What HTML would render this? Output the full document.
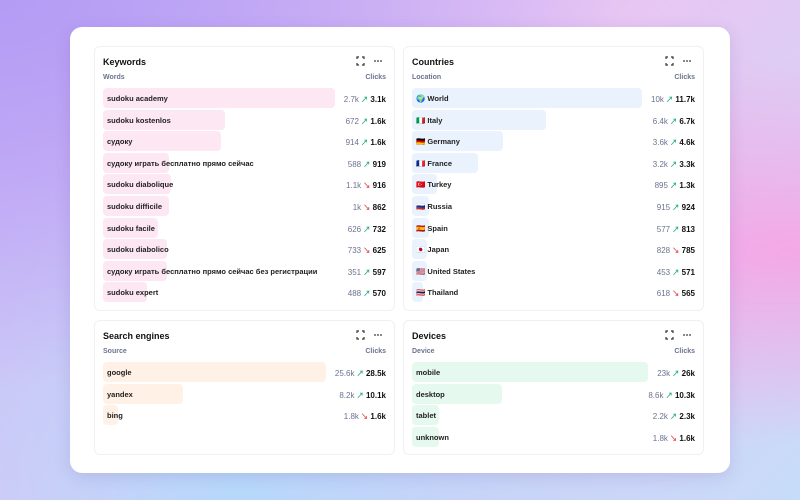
<!DOCTYPE html><html><head><meta charset="utf-8"><style>
*{box-sizing:border-box;margin:0;padding:0}
body{width:800px;height:500px;overflow:hidden;font-family:"Liberation Sans","Noto Sans CJK SC",sans-serif;
background:radial-gradient(ellipse at 0% 0%,#b49cf5 0%,transparent 55%),radial-gradient(ellipse at 100% 50%,#f4a8e6 0%,transparent 55%),radial-gradient(ellipse at 30% 100%,#b6d8fb 0%,transparent 60%),linear-gradient(135deg,#c7b0f6,#e8c6f3 50%,#c6dcf9);position:relative}
.card{position:absolute;left:70px;top:27px;width:660px;height:446px;background:#fff;border-radius:12px;box-shadow:0 4px 16px rgba(80,60,140,.15)}
.p{position:absolute;border:1px solid #eef0f4;border-radius:6px}
.t{position:absolute;left:8px;top:10px;font-size:9px;font-weight:bold;color:#111}
.ic{position:absolute;right:10px;top:9px;width:28px;height:10px}
.h{position:absolute;left:8px;right:8px;top:27px;font-size:7px;color:#6b7390;font-weight:bold}
.h span{float:right}
.r{position:absolute;left:8px;right:8px;height:20px;font-size:7.5px;color:#222;font-weight:bold}
.b{position:absolute;left:0;top:0;height:20px;border-radius:4px}
.l{position:absolute;left:4px;top:6px;white-space:nowrap}
.v{position:absolute;right:0;top:6px;white-space:nowrap}
.v i{font-style:normal;color:#6b7390;font-weight:normal;font-size:8px}
.u{color:#22b07d;margin:0 2px}.d{color:#e5484d;margin:0 2px}
.v b{color:#111;font-size:8px}
</style></head><body><div class="card"></div>
<div id="root"></div>
<script>
const icon=`<svg class="ic" viewBox="0 0 28 10"><g fill="none" stroke="#333" stroke-width="1.2"><path d="M1 3V1h2M6 1h2v2M8 7v2H6M3 9H1V7"/></g><g fill="#333"><circle cx="19" cy="5" r="0.9"/><circle cx="22" cy="5" r="0.9"/><circle cx="25" cy="5" r="0.9"/></g></svg>`;
function panel(x,y,w,h,title,hdr,color,rows){
let s=`<div class="p" style="left:${x}px;top:${y}px;width:${w}px;height:${h}px"><div class="t">${title}</div>${icon}<div class="h">${hdr}<span>Clicks</span></div>`;
rows.forEach((r,i)=>{s+=`<div class="r" style="top:${41+i*21.6}px"><div class="b" style="width:${r[1]}px;background:${color}"></div><div class="l">${r[0]}</div><div class="v"><i>${r[2]}</i><span class="${r[3]}">${r[3]=='u'?'↗':'↘'}</span><b>${r[4]}</b></div></div>`});
return s+'</div>';}
document.getElementById('root').innerHTML=
panel(94,46,301,265,'Keywords','Words','#fce7f3',[['sudoku academy',232,'2.7k','u','3.1k'],['sudoku kostenlos',122,'672','u','1.6k'],['судоку',118,'914','u','1.6k'],['судоку играть бесплатно прямо сейчас',66,'588','u','919'],['sudoku diabolique',68,'1.1k','d','916'],['sudoku difficile',66,'1k','d','862'],['sudoku facile',55,'626','u','732'],['sudoku diabolico',64,'733','d','625'],['судоку играть бесплатно прямо сейчас без регистрации',64,'351','u','597'],['sudoku expert',44,'488','u','570']])+
panel(403,46,301,265,'Countries','Location','#eaf2fd',[['🌍 World',230,'10k','u','11.7k'],['🇮🇹 Italy',134,'6.4k','u','6.7k'],['🇩🇪 Germany',91,'3.6k','u','4.6k'],['🇫🇷 France',66,'3.2k','u','3.3k'],['🇹🇷 Turkey',25,'895','u','1.3k'],['🇷🇺 Russia',17,'915','u','924'],['🇪🇸 Spain',17,'577','u','813'],['🇯🇵 Japan',15,'828','d','785'],['🇺🇸 United States',15,'453','u','571'],['🇹🇭 Thailand',11,'618','d','565']])+
panel(94,320,301,135,'Search engines','Source','#fff1e6',[['google',223,'25.6k','u','28.5k'],['yandex',80,'8.2k','u','10.1k'],['bing',15,'1.8k','d','1.6k']])+
panel(403,320,301,135,'Devices','Device','#e6f9ef',[['mobile',236,'23k','u','26k'],['desktop',90,'8.6k','u','10.3k'],['tablet',27,'2.2k','u','2.3k'],['unknown',27,'1.8k','d','1.6k']]);
</script></body></html>
